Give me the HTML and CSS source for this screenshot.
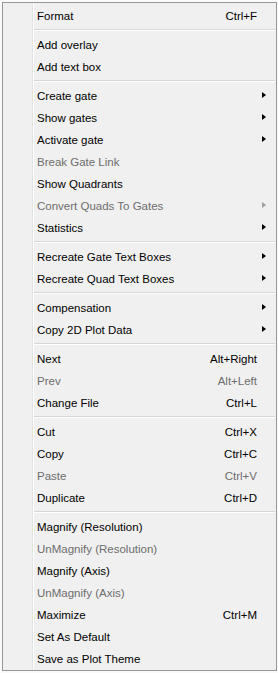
FILE: index.html
```html
<!doctype html>
<html lang=en>
<head>
	<meta charset=utf-8>
	<title>Plot Context Menu</title>
	<link rel="stylesheet" href="styles.css">
</head>
<body>
	<ul class="menu">
		<li class="item"><span class="label">Format</span><span class="key">Ctrl+F</span></li>
		<li class="sep"></li>
		<li class="item"><span class="label">Add overlay</span></li>
		<li class="item"><span class="label">Add text box</span></li>
		<li class="sep"></li>
		<li class="item sub"><span class="label">Create gate</span></li>
		<li class="item sub"><span class="label">Show gates</span></li>
		<li class="item sub"><span class="label">Activate gate</span></li>
		<li class="item off"><span class="label">Break Gate Link</span></li>
		<li class="item"><span class="label">Show Quadrants</span></li>
		<li class="item sub off"><span class="label">Convert Quads To Gates</span></li>
		<li class="item sub"><span class="label">Statistics</span></li>
		<li class="sep"></li>
		<li class="item sub"><span class="label">Recreate Gate Text Boxes</span></li>
		<li class="item sub"><span class="label">Recreate Quad Text Boxes</span></li>
		<li class="sep"></li>
		<li class="item sub"><span class="label">Compensation</span></li>
		<li class="item sub"><span class="label">Copy 2D Plot Data</span></li>
		<li class="sep"></li>
		<li class="item"><span class="label">Next</span><span class="key">Alt+Right</span></li>
		<li class="item off"><span class="label">Prev</span><span class="key">Alt+Left</span></li>
		<li class="item"><span class="label">Change File</span><span class="key">Ctrl+L</span></li>
		<li class="sep"></li>
		<li class="item"><span class="label">Cut</span><span class="key">Ctrl+X</span></li>
		<li class="item"><span class="label">Copy</span><span class="key">Ctrl+C</span></li>
		<li class="item off"><span class="label">Paste</span><span class="key">Ctrl+V</span></li>
		<li class="item"><span class="label">Duplicate</span><span class="key">Ctrl+D</span></li>
		<li class="sep"></li>
		<li class="item"><span class="label">Magnify (Resolution)</span></li>
		<li class="item off"><span class="label">UnMagnify (Resolution)</span></li>
		<li class="item"><span class="label">Magnify (Axis)</span></li>
		<li class="item off"><span class="label">UnMagnify (Axis)</span></li>
		<li class="item"><span class="label">Maximize</span><span class="key">Ctrl+M</span></li>
		<li class="item"><span class="label">Set As Default</span></li>
		<li class="item"><span class="label">Save as Plot Theme</span></li>
	</ul>
</body>
</html>
```
FILE: styles.css
```css
html, body	{ margin:0; padding:0; background:#fafafa; }
body		{ font-family:"Liberation Sans", Arial, sans-serif; font-size:11.5px; color:#000; }

.menu	{ list-style:none; margin:2px 1px 0 2px; padding:1px;
		  box-sizing:border-box; width:275px;
		  border:1px solid #979797; background-color:#f0f0f0;
		  background-image:linear-gradient(to right, transparent 29px, #e2e3e3 29px, #e2e3e3 30px, #fff 30px, #fff 31px, transparent 31px);
		}

.item	{ display:flex; align-items:center; height:22px; line-height:22px;
		  padding:1px 18px 0 33px; box-sizing:border-box; position:relative; white-space:nowrap; }
.item .label	{ flex:1; }
.item .key		{ text-align:right; }
.off			{ color:#6d6d6d; }

/* submenu arrow */
.sub:after	{ content:""; position:absolute; right:9px; top:8px;
			  border-style:solid; border-width:3.5px 0 3.5px 4px;
			  border-color:transparent transparent transparent #000; }
.sub.off:after	{ border-left-color:#a0a0a0; }

.sep	{ height:7px; margin-left:30px; box-sizing:border-box;
		  background:linear-gradient(#f0f0f0 3px, #d7d7d7 3px, #d7d7d7 4px, #fff 4px, #fff 5px, #f0f0f0 5px); }
```
